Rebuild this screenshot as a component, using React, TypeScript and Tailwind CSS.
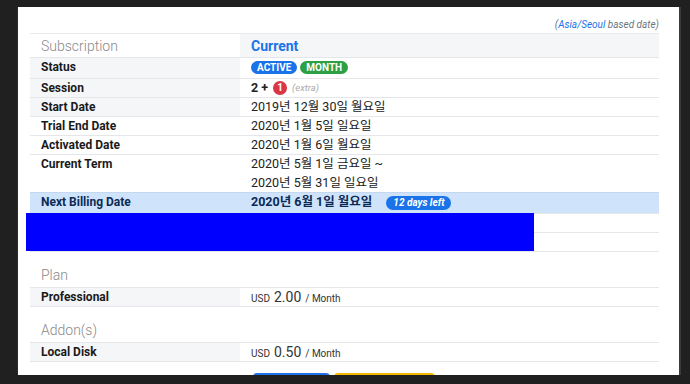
const font = { fontFamily: 'Roboto, "Noto Sans CJK KR", sans-serif' }

function Row({
  label,
  children,
  h = 'h-[19px]',
  labelBg = '',
}: {
  label: string
  children?: React.ReactNode
  h?: string
  labelBg?: string
}) {
  return (
    <div className={`flex border-t border-[#e4e6e9] ${h}`}>
      <div className={`w-[210px] shrink-0 pl-[11px] text-[12px] font-bold text-[#1a1a1a] leading-[18px] ${labelBg}`}>
        {label}
      </div>
      <div className="flex-1 pl-[11px] text-[12.5px] text-[#222] leading-[18px]">{children}</div>
    </div>
  )
}

function Price({ amount }: { amount: string }) {
  return (
    <div className="flex items-baseline leading-[18px]">
      <span className="text-[10px] text-[#333]">USD</span>
      <span className="ml-[4px] text-[14px] text-[#333]">{amount}</span>
      <span className="ml-[4px] text-[10px] text-[#333]">/ Month</span>
    </div>
  )
}

export default function App() {
  return (
    <div className="w-[690px] h-[384px] bg-[#202020] overflow-hidden" style={font}>
      <div className="ml-[17px] mt-[7px] w-[664px] h-[368px] overflow-hidden bg-white border-l border-[#2c2c2c] border-r-2 border-r-[#3a3a3a] pl-[12px] pr-[20px]">
        {/* 기준 시간대 */}
        <div className="h-[26px] pt-[12px] text-right text-[10px] italic text-[#6c757d] leading-[12px]">
          (<span className="text-[#1a73e8]">Asia/Seoul</span> based date)
        </div>

        {/* 구독 정보 */}
        <div className="flex border-t border-[#e8eaed] h-[24px]">
          <div className="w-[210px] shrink-0 pl-[11px] text-[14px] font-light text-[#8a8a8a] leading-[24px]">
            Subscription
          </div>
          <div className="flex-1 bg-[#f5f6f8] pl-[11px] text-[14px] font-bold text-[#1a73e8] leading-[25px]">
            Current
          </div>
        </div>
        <Row label="Status" h="h-[21px]" labelBg="bg-[#f5f6f8]">
          <div className="flex gap-[3px] pt-[3px]">
            <span className="rounded-full bg-[#1a73e8] px-[6px] text-[10px] font-bold text-white leading-[13px]">ACTIVE</span>
            <span className="rounded-full bg-[#2ea044] px-[6px] text-[10px] font-bold text-white leading-[13px]">MONTH</span>
          </div>
        </Row>
        <Row label="Session" labelBg="bg-[#f5f6f8]">
          <div className="flex items-center h-[18px]">
            <span className="font-bold">2 +</span>
            <span className="ml-[5px] w-[14px] h-[14px] rounded-full bg-[#dc3545] text-white text-[10px] font-bold leading-[14px] text-center">1</span>
            <span className="ml-[5px] text-[9.5px] italic text-[#aaa]">(extra)</span>
          </div>
        </Row>
        <Row label="Start Date" labelBg="bg-[#f5f6f8]">2019년 12월 30일 월요일</Row>
        <Row label="Trial End Date">2020년 1월 5일 일요일</Row>
        <Row label="Activated Date">2020년 1월 6일 월요일</Row>
        <Row label="Current Term" h="h-[38px]">
          <div>2020년 5월 1일 금요일 ~</div>
          <div className="leading-[19px]">2020년 5월 31일 일요일</div>
        </Row>
        <div className="flex border-t border-[#c3d8ef] h-[21px] bg-[#cfe4fb] text-[#0b2a55]">
          <div className="w-[210px] shrink-0 pl-[11px] text-[12px] font-bold leading-[19px]">Next Billing Date</div>
          <div className="flex-1 pl-[11px] flex items-center gap-[14px] text-[12.5px] font-bold h-[19px]">
            2020년 6월 1일 월요일
            <span className="rounded-full bg-[#1a73e8] px-[7px] text-[10px] italic font-bold text-white leading-[14px]">
              12 days left
            </span>
          </div>
        </div>
        <div className="relative">
          <Row label="" />
          <Row label="" />
          <div className="border-t border-[#e4e6e9]" />
          {/* 가림 처리 */}
          <div className="absolute left-[-4px] top-0 w-[508px] h-[38px] bg-[#0000ff]" />
        </div>

        {/* 플랜 */}
        <div className="h-[35px] pt-[14px] pl-[11px] text-[14px] font-light text-[#8a8a8a] leading-[18px]">Plan</div>
        <div className="flex border-t border-b border-[#e4e6e9] h-[20px]">
          <div className="w-[210px] shrink-0 pl-[11px] bg-[#f5f6f8] text-[12px] font-bold text-[#1a1a1a] leading-[18px]">Professional</div>
          <div className="flex-1 pl-[11px]"><Price amount="2.00" /></div>
        </div>

        {/* 애드온 */}
        <div className="h-[35px] pt-[14px] pl-[11px] text-[14px] font-light text-[#8a8a8a] leading-[18px]">Addon(s)</div>
        <div className="flex border-t border-b border-[#e4e6e9] h-[20px]">
          <div className="w-[210px] shrink-0 pl-[11px] bg-[#f5f6f8] text-[12px] font-bold text-[#1a1a1a] leading-[18px]">Local Disk</div>
          <div className="flex-1 pl-[11px]"><Price amount="0.50" /></div>
        </div>

        <div className="flex gap-[4px] pl-[223px] mt-[11px]">
          <div className="w-[77px] h-[24px] rounded-[4px] bg-[#1a73e8]" />
          <div className="w-[101px] h-[24px] rounded-[4px] bg-[#f5b800]" />
        </div>
      </div>
    </div>
  )
}
